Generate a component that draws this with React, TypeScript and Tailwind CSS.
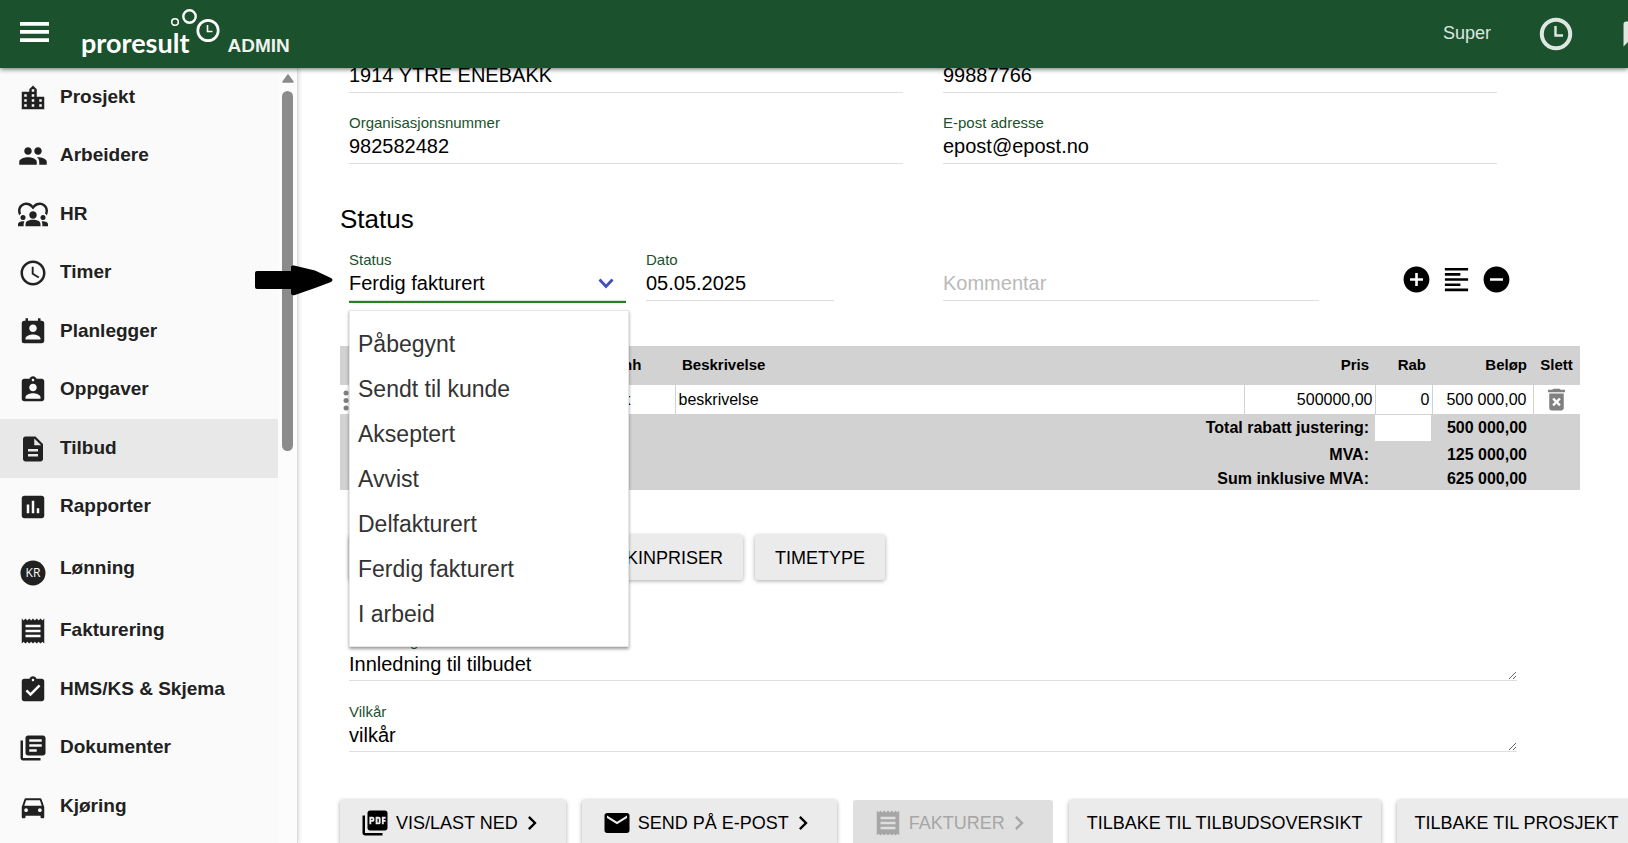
import { ReactNode, useState } from "react";
import {
  MdAddCircle,
  MdAssessment,
  MdAssignmentInd,
  MdAssignmentTurnedIn,
  MdChevronRight,
  MdDeleteForever,
  MdDescription,
  MdDirectionsCar,
  MdDiversity1,
  MdFormatAlignLeft,
  MdLibraryBooks,
  MdLocationCity,
  MdMail,
  MdMessage,
  MdPeople,
  MdPermContactCalendar,
  MdPictureAsPdf,
  MdReceipt,
  MdRemoveCircle,
  MdSchedule,
} from "react-icons/md";

const STATUSES = [
  "Påbegynt",
  "Sendt til kunde",
  "Akseptert",
  "Avvist",
  "Delfakturert",
  "Ferdig fakturert",
  "I arbeid",
];

function KrIcon() {
  return (
    <svg width="30" height="40" viewBox="0 0 30 40" aria-hidden="true">
      <circle cx="15" cy="19" r="12.5" fill="currentColor" />
      <text
        x="15"
        y="23"
        textAnchor="middle"
        fill="#fff"
        className="font-['Open_Sans',sans-serif] text-[12px]"
      >
        KR
      </text>
    </svg>
  );
}

const MENU: { label: string; icon: ReactNode; active?: boolean; tall?: boolean }[] = [
  { label: "Prosjekt", icon: <MdLocationCity size={30} /> },
  { label: "Arbeidere", icon: <MdPeople size={30} /> },
  { label: "HR", icon: <MdDiversity1 size={30} /> },
  { label: "Timer", icon: <MdSchedule size={30} /> },
  { label: "Planlegger", icon: <MdPermContactCalendar size={30} /> },
  { label: "Oppgaver", icon: <MdAssignmentInd size={30} /> },
  { label: "Tilbud", icon: <MdDescription size={30} />, active: true },
  { label: "Rapporter", icon: <MdAssessment size={30} /> },
  { label: "Lønning", icon: <KrIcon />, tall: true },
  { label: "Fakturering", icon: <MdReceipt size={30} /> },
  { label: "HMS/KS & Skjema", icon: <MdAssignmentTurnedIn size={30} /> },
  { label: "Dokumenter", icon: <MdLibraryBooks size={30} /> },
  { label: "Kjøring", icon: <MdDirectionsCar size={30} /> },
];

function Header() {
  return (
    <header className="relative z-20 flex h-[68px] shrink-0 items-center justify-between overflow-x-clip bg-[#1b512d] pl-5 text-white shadow-[0_1px_5px_rgba(0,0,0,0.6)]">
      <div className="flex h-full items-center">
        <button type="button" aria-label="Meny" className="mb-1">
          <svg width="29" height="20" viewBox="0 0 29 20" fill="currentColor">
            <path d="M0 0h29v3.7H0zM0 8.1h29v3.7H0zM0 16.3h29V20H0z" />
          </svg>
        </button>
        {/* Logo */}
        <a href="#" className="ml-8 flex h-full items-end pb-2">
          <span className="relative font-['Lato',sans-serif] text-[27px] leading-[34px] font-bold">
            proresult
            <svg
              className="absolute -top-[21px] left-[88px]"
              width="52"
              height="38"
              viewBox="0 0 52 38"
              fill="none"
              stroke="currentColor"
            >
              <circle cx="6" cy="17" r="3.3" strokeWidth="1.6" />
              <circle cx="20.500" cy="11.500" r="6.2" strokeWidth="2.4" />
              <circle cx="39" cy="25.500" r="10.2" strokeWidth="2.7" />
              <path d="M38.5 20v6.5h5" strokeWidth="1.6" />
            </svg>
          </span>
          <span className="ml-[38px] text-[19px] leading-7 font-bold text-[#eef2ef]">ADMIN</span>
        </a>
      </div>
      <div className="-mr-[23px] flex items-center text-[#dfe7e1]">
        <span className="mb-[2px] text-lg">Super</span>
        <button type="button" aria-label="Timer" className="ml-12">
          <svg width="34" height="34" viewBox="0 0 34 34" fill="none" stroke="currentColor">
            <circle cx="17" cy="17" r="14.2" strokeWidth="4" />
            <path d="M16.5 9v9.5h7.5" strokeWidth="2.4" />
          </svg>
        </button>
        <button type="button" aria-label="Meldinger" className="ml-12">
          <MdMessage size={30} />
        </button>
      </div>
    </header>
  );
}

function Sidebar() {
  return (
    <aside className="flex w-[298px] shrink-0 overflow-hidden border-r border-[#dcdcdc] bg-[#fcfcfc] shadow-[1px_0_4px_rgba(0,0,0,0.15)]">
      <nav className="w-[278px] bg-[#fafafa] text-[#212121]">
        <ul>
          {MENU.map((item) => (
            <li
              key={item.label}
              className={item.tall ? "h-[65px] pt-[3px]" : "odd:h-[58px] even:h-[59px]"}
            >
              <a
                href="#"
                className={
                  item.active
                    ? "flex h-[59px] items-start gap-3 bg-[#e8e8e8] pt-[15px] pl-[18px]"
                    : "flex items-start gap-3 pt-[15px] pl-[18px]"
                }
              >
                {item.icon}
                <span className="text-[19px] leading-7 font-bold">{item.label}</span>
              </a>
            </li>
          ))}
        </ul>
      </nav>
      {/* Scrollbar */}
      <div className="flex flex-1 flex-col items-center gap-2 pt-[6px]">
        <svg width="12" height="9" viewBox="0 0 12 9" className="shrink-0">
          <path d="M6 1L11 8H1z" fill="#8b8b8b" stroke="#8b8b8b" strokeWidth="1.5" strokeLinejoin="round" />
        </svg>
        <div className="h-[360px] w-[11px] shrink-0 rounded-full bg-[#8b8b8b]" />
      </div>
    </aside>
  );
}

type FieldProps = {
  id: string;
  label?: string;
  value?: string;
  placeholder?: string;
  className?: string;
};

function Field({ id, label, value, placeholder, className }: FieldProps) {
  return (
    <div className={className}>
      <label htmlFor={id} className="block h-5 text-[15px] leading-[18px] text-[#1b512d]">
        {label}
      </label>
      <input
        id={id}
        type="text"
        defaultValue={value}
        placeholder={placeholder}
        aria-label={label ? undefined : placeholder}
        className="block h-[30px] w-full border-b border-[#dedede] pb-[5px] text-xl leading-6 outline-none placeholder:text-[#b9b9b9]"
      />
    </div>
  );
}

function TextField({ id, label, value }: FieldProps) {
  return (
    <div>
      <label htmlFor={id} className="block h-5 text-[15px] leading-5 text-[#1b512d]">
        {label}
      </label>
      <textarea
        id={id}
        defaultValue={value}
        rows={1}
        className="block h-[30px] w-full resize-y overflow-hidden border-b border-[#dedede] pt-px text-xl leading-6 outline-none"
      />
    </div>
  );
}

function StatusField() {
  const [status, setStatus] = useState("Ferdig fakturert");

  return (
    <div className="relative w-1/2">
      <label htmlFor="status" className="block h-5 text-[15px] leading-[18px] text-[#1b512d]">
        Status
      </label>
      <div className="relative border-b-2 border-[#22821f]">
        <select
          id="status"
          value={status}
          onChange={(e) => setStatus(e.target.value)}
          className="block h-[30px] w-full appearance-none border-b border-[#dedede] pb-[6px] text-xl leading-6 outline-none"
        >
          {STATUSES.map((name) => (
            <option key={name}>{name}</option>
          ))}
        </select>
        <svg
          className="pointer-events-none absolute top-[7px] right-3"
          width="16"
          height="11"
          viewBox="0 0 16 11"
          fill="none"
          stroke="#3f51b5"
          strokeWidth="2.8"
        >
          <path d="M1.5 1.500L8 8.500L14.500 1.500" />
        </svg>
      </div>

      {/* Arrow pointing at the field */}
      <svg
        className="pointer-events-none absolute top-[14px] -left-[94px] z-10"
        width="79"
        height="31"
        viewBox="0 0 79 31"
      >
        <path
          d="M2 6H36V2Q36 0 39 0.500L60 5.500L76 13Q79 15 76 17L60 23L40 30Q36 31 36 28V24H2Q0 24 0 22V8Q0 6 2 6Z"
          fill="#000"
        />
      </svg>

      {/* Open list */}
      <ul className="absolute top-[59px] left-0 z-10 w-[280px] border border-[#e6e6e6] bg-white pt-[11px] pb-[9px] shadow-[0_2px_3px_rgba(0,0,0,0.4)]">
        {STATUSES.map((name) => (
          <li key={name}>
            <button
              type="button"
              onClick={() => setStatus(name)}
              className="block h-[45px] w-full pl-2 text-left text-[23px] text-[#333]"
            >
              {name}
            </button>
          </li>
        ))}
      </ul>
    </div>
  );
}

function LinesTable() {
  return (
    <table className="mt-[43px] w-full table-fixed bg-[#d2d2d2] text-base">
      <colgroup>
        <col className="w-5" />
        <col className="w-[247px]" />
        <col className="w-[68px]" />
        <col />
        <col className="w-[131px]" />
        <col className="w-[57px]" />
        <col className="w-[101px]" />
        <col className="w-[47px]" />
      </colgroup>
      <thead>
        <tr className="h-[39px] text-[15px]">
          <th />
          <th />
          <th className="pl-[6px] text-left">Enh</th>
          <th className="pl-[7px] text-left">Beskrivelse</th>
          <th className="pr-[6px] text-right">Pris</th>
          <th className="pr-[6px] text-right">Rab</th>
          <th className="pr-[6px] text-right">Beløp</th>
          <th>Slett</th>
        </tr>
      </thead>
      <tbody>
        <tr className="h-[29px] bg-white">
          <td>
            <svg width="14" height="22" viewBox="0 0 14 22" fill="#808080">
              <circle cx="6" cy="4" r="2.500" />
              <circle cx="6" cy="11.500" r="2.500" />
              <circle cx="6" cy="19" r="2.500" />
            </svg>
          </td>
          <td />
          <td className="border-r border-[#d2d2d2] pl-[3px]">stk</td>
          <td className="border-r border-[#d2d2d2] pl-[3px]">beskrivelse</td>
          <td className="border-r border-[#d2d2d2] pr-[2px] text-right">500000,00</td>
          <td className="border-r border-[#d2d2d2] pr-[2px] text-right">0</td>
          <td className="border-r border-[#d2d2d2] pr-[6px] text-right">500 000,00</td>
          <td>
            <button type="button" aria-label="Slett" className="mx-auto block">
              <MdDeleteForever size={29} className="text-[#808080]" />
            </button>
          </td>
        </tr>
      </tbody>
      <tfoot className="font-bold">
        <tr className="h-7">
          <td colSpan={5} className="pr-[6px] text-right">
            Total rabatt justering:
          </td>
          <td className="p-0">
            <input
              type="text"
              aria-label="Total rabatt justering"
              className="block h-[26px] w-14 bg-white outline-none"
            />
          </td>
          <td className="pr-[6px] text-right">500 000,00</td>
          <td />
        </tr>
        <tr className="h-[25px]">
          <td colSpan={5} className="pr-[6px] text-right">
            MVA:
          </td>
          <td />
          <td className="pr-[6px] text-right">125 000,00</td>
          <td />
        </tr>
        <tr className="h-[23px] leading-[23px]">
          <td colSpan={5} className="pr-[6px] text-right">
            Sum inklusive MVA:
          </td>
          <td />
          <td className="pr-[6px] text-right">625 000,00</td>
          <td />
        </tr>
      </tfoot>
    </table>
  );
}

type ActionProps = {
  children?: ReactNode;
  icon?: ReactNode;
  disabled?: boolean;
  label?: string;
  className?: string;
};

function Action({ children, icon, disabled, label, className = "px-5" }: ActionProps) {
  return (
    <button
      type="button"
      disabled={disabled}
      aria-label={label}
      className={`flex h-[45px] shrink-0 items-center rounded-[3px] bg-[#ebebeb] text-lg whitespace-nowrap shadow-[0_1px_4px_rgba(0,0,0,0.35)] disabled:bg-[#dfdfdf] disabled:text-[#a6a6a6] disabled:shadow-none ${className}`}
    >
      {icon}
      <span className={icon ? "ml-[6px]" : ""}>{children}</span>
      {icon && <MdChevronRight size={28} className="stroke-current" />}
    </button>
  );
}

function App() {
  return (
    <div className="flex h-screen flex-col overflow-hidden bg-white font-['Liberation_Sans',Arial,sans-serif] text-black">
      <Header />
      <div className="flex min-h-0 flex-1">
        <Sidebar />
        <main className="-mt-[25px] min-w-0 flex-1 pr-12 pl-[42px]">
          {/* Customer */}
          <section className="mr-[83px] ml-[9px] grid grid-cols-2 gap-x-10 gap-y-[21px]">
            <Field id="postnr" label="" value="1914 YTRE ENEBAKK" />
            <Field id="telefon" label="" value="99887766" />
            <Field id="orgnr" label="Organisasjonsnummer" value="982582482" />
            <Field id="epost" label="E-post adresse" value="epost@epost.no" />
          </section>

          {/* Status */}
          <h2 className="mt-10 text-[26px] leading-[30px]">Status</h2>
          <section className="mt-[17px] mr-[83px] ml-[9px] grid grid-cols-2 gap-x-10">
            <div className="flex gap-5">
              <StatusField />
              <Field id="dato" label="Dato" value="05.05.2025" className="w-[188px]" />
            </div>
            <div className="flex">
              <Field id="kommentar" placeholder="Kommentar" className="w-[376px] shrink-0" />
              <div className="ml-[82px] flex shrink-0 items-start gap-[9px] pt-[13px]">
                <button type="button" aria-label="Legg til">
                  <MdAddCircle size={31} />
                </button>
                <button type="button" aria-label="Tekst">
                  <MdFormatAlignLeft size={31} />
                </button>
                <button type="button" aria-label="Fjern">
                  <MdRemoveCircle size={31} />
                </button>
              </div>
            </div>
          </section>

          <LinesTable />

          <div className="mt-[45px] ml-[9px] flex gap-3">
            <Action label="Varepriser" className="w-[189px]" />
            <Action className="w-[193px] justify-end pr-5">MASKINPRISER</Action>
            <Action>TIMETYPE</Action>
          </div>

          <section className="mt-[51px] mr-[63px] ml-[9px] flex flex-col gap-[21px]">
            <TextField id="innledning" label="Innledning" value="Innledning til tilbudet" />
            <TextField id="vilkar" label="Vilkår" value="vilkår" />
          </section>

          <div className="mt-12 flex gap-4">
            <Action icon={<MdPictureAsPdf size={30} />}>VIS/LAST NED</Action>
            <Action icon={<MdMail size={30} />}>SEND PÅ E-POST</Action>
            <Action icon={<MdReceipt size={30} />} disabled>
              FAKTURER
            </Action>
            <Action className="px-[18px]">TILBAKE TIL TILBUDSOVERSIKT</Action>
            <Action className="px-[18px]">TILBAKE TIL PROSJEKT</Action>
          </div>
        </main>
      </div>
    </div>
  );
}

export default App;
